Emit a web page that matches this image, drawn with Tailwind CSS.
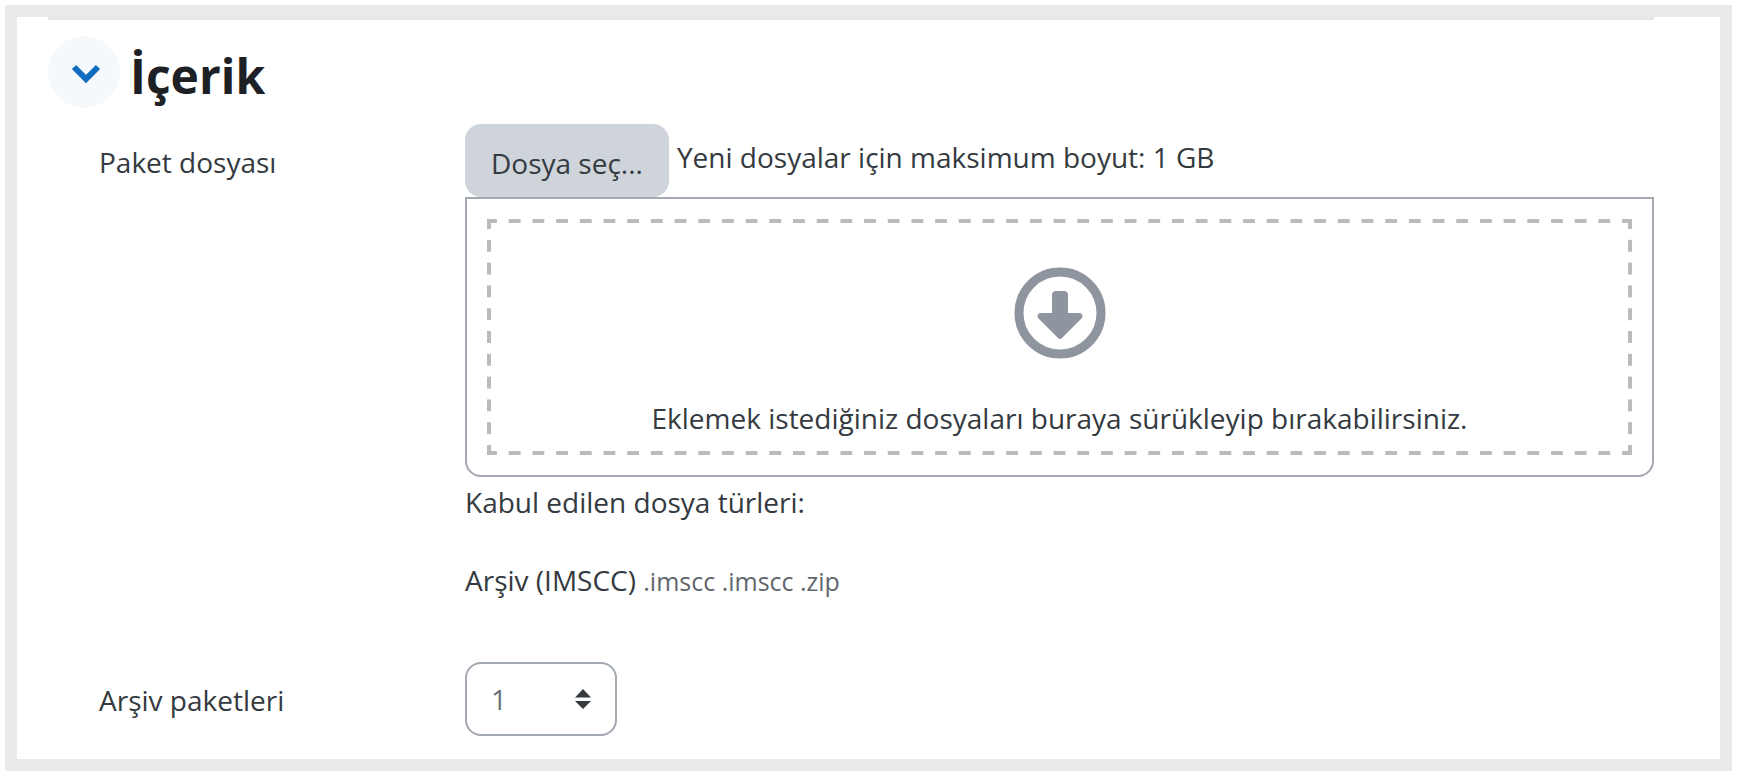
<!DOCTYPE html>
<html lang="tr">
<head>
<meta charset="utf-8">
<meta name="viewport" content="width=device-width, initial-scale=1">
<title>İçerik</title>
<script src="https://cdn.jsdelivr.net/npm/@tailwindcss/browser@4"></script>
<style>
  /* Dashed frame: each side is a row of tiles that rounds to a whole number of dashes. */
  .dashes {
    --c: #bbb;
    --h: linear-gradient(to right, var(--c) 0 12.5%, transparent 12.5% 37.5%, var(--c) 37.5% 62.5%, transparent 62.5% 87.5%, var(--c) 87.5%);
    --v: linear-gradient(to bottom, var(--c) 0 25%, transparent 25% 75%, var(--c) 75%);
    background:
      var(--h) 0 -4px / 47px 4px round no-repeat,
      var(--h) 0 calc(100% + 4px) / 47px 4px round no-repeat,
      var(--v) -4px 0 / 4px 23px no-repeat round,
      var(--v) calc(100% + 4px) 0 / 4px 23px no-repeat round;
    background-origin: padding-box;
    background-clip: border-box;
  }
</style>
</head>
<body class="bg-white p-[5px] font-['Open_Sans','Noto_Sans',sans-serif] text-[28px] leading-[42px] text-[#343a40]">
<main class="border-12 border-[#eaeaea] pr-[66px] pl-[31px] pb-[23px]">
  <hr class="border-t-3 border-[#e6e9ec]">
  <form>
    <h2 class="mt-4 flex items-center gap-[10px]">
      <button type="button" aria-label="İçerik bölümünü daralt" aria-expanded="true" class="flex size-[72px] items-center justify-center rounded-full bg-[#f5f9fc] pt-1 pl-1">
        <svg class="h-5 w-[30px]" viewBox="0 0 30 20" fill="none" stroke="#0f6cbf" stroke-width="6"><path d="M3 3 15 15 27 3"/></svg>
      </button>
      <span class="pt-2 text-5xl leading-[64px] font-bold text-[#1d2125]">İçerik</span>
    </h2>
    <div class="mt-4 grid grid-cols-[367px_1fr] gap-y-[60px] pl-[51px]">
      <label for="file" class="pt-[17px]">Paket dosyası</label>
      <div class="-ml-px">
        <div class="flex items-start gap-2">
          <button id="file" type="button" class="h-[73px] rounded-2xl bg-[#ced4da] px-[26px] pt-1">Dosya seç...</button>
          <span class="pt-3">Yeni dosyalar için maksimum boyut: 1 GB</span>
        </div>
        <div class="rounded-b-2xl border-2 border-[#a3a9b1] p-5">
          <div class="dashes flex flex-col items-center border-4 border-transparent pt-11 pb-3">
            <svg class="size-[92px]" viewBox="0 0 92 92" fill="#8f959e"><circle cx="46" cy="46" r="41" fill="none" stroke="#8f959e" stroke-width="9"/><path d="M42 24h8q4 0 4 4v18h10q6 0 4 5L48 71q-2 2-4 0L24 51q-2-5 4-5h10V28q0-4 4-4z"/></svg>
            <p class="mt-[38px]">Eklemek istediğiniz dosyaları buraya sürükleyip bırakabilirsiniz.</p>
          </div>
        </div>
        <p class="mt-1">Kabul edilen dosya türleri:</p>
        <p class="mt-9">Arşiv (IMSCC) <small class="text-[25px] leading-[42px] text-[#5f666d]">.imscc .imscc .zip</small></p>
      </div>
      <label for="packages" class="pt-[17px]">Arşiv paketleri</label>
      <div class="relative -ml-px w-[152px]">
        <select id="packages" class="h-[74px] w-full appearance-none rounded-2xl border-2 border-[#a3a9b1] bg-white pl-6 text-[#6a737b]"><option>1</option></select>
        <svg class="pointer-events-none absolute top-[27px] right-[26px] h-5 w-4" viewBox="0 0 16 20" fill="#343a40"><path d="M8 0 16 8.500H0zM0 12h16L8 20z"/></svg>
      </div>
    </div>
  </form>
</main>
</body>
</html>
